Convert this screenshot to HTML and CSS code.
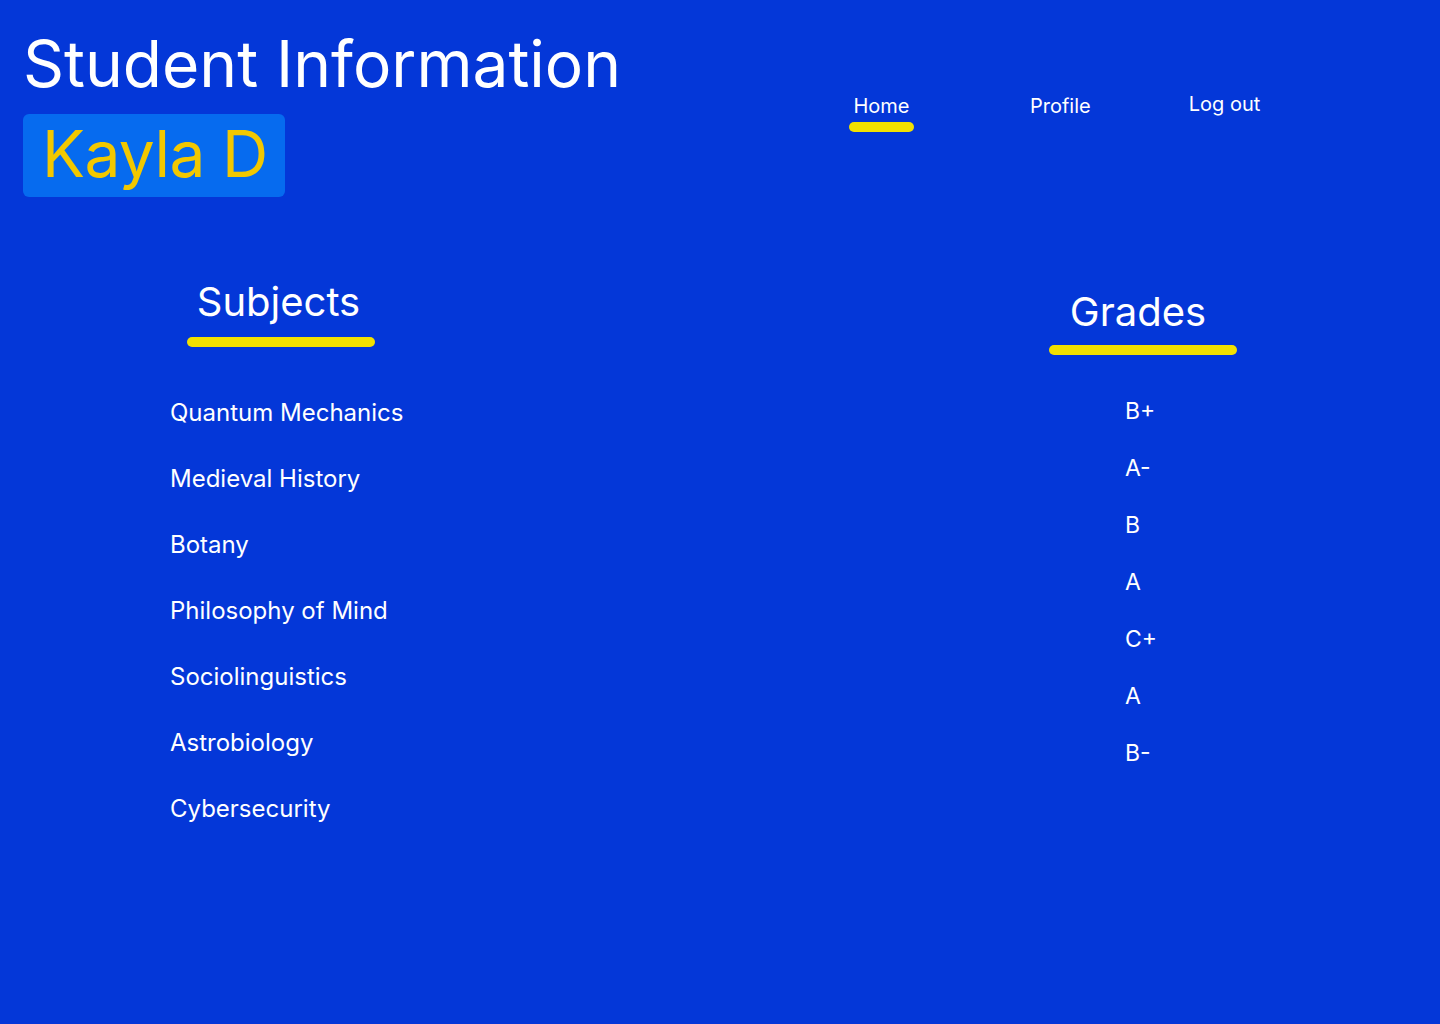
FILE: index.html
```html
<!DOCTYPE html>
<html lang="en">
<head>
<meta charset="utf-8">
<title>Student Information</title>
<link rel="stylesheet" href="styles.css">
</head>
<body>
<div class="page">
  <header class="header">
    <div class="brand">
      <h1 class="title">Student Information</h1>
      <div class="badge">Kayla D</div>
    </div>
    <nav class="nav">
      <a class="nav-item nav-item--active" href="#">
        <span class="nav-text">Home</span>
        <span class="nav-bar"></span>
      </a>
      <a class="nav-item nav-item--profile" href="#">
        <span class="nav-text">Profile</span>
      </a>
      <a class="nav-item nav-item--raised" href="#">
        <span class="nav-text">Log out</span>
      </a>
    </nav>
  </header>

  <main class="main">
    <section class="col col--subjects">
      <div class="col-head col-head--subjects">
        <h2 class="col-title">Subjects</h2>
        <div class="col-bar"></div>
      </div>
      <ul class="subject-list">
        <li>Quantum Mechanics</li>
        <li>Medieval History</li>
        <li>Botany</li>
        <li>Philosophy of Mind</li>
        <li>Sociolinguistics</li>
        <li>Astrobiology</li>
        <li>Cybersecurity</li>
      </ul>
    </section>
    <section class="col col--grades">
      <div class="col-head col-head--grades">
        <h2 class="col-title">Grades</h2>
        <div class="col-bar col-bar--grades"></div>
      </div>
      <ul class="grade-list">
        <li>B+</li>
        <li>A-</li>
        <li>B</li>
        <li>A</li>
        <li>C+</li>
        <li>A</li>
        <li>B-</li>
      </ul>
    </section>
  </main>
</div>
</body>
</html>
```

FILE: styles.css
```css
* { box-sizing: border-box; }

html, body {
  margin: 0;
  padding: 0;
}

body {
  background: #0437d8;
  color: #ffffff;
  font-family: "Inter", "Noto Sans", sans-serif;
  min-height: 1024px;
}

.page {
  display: flex;
  flex-direction: column;
}

.header {
  display: grid;
  grid-template-columns: 826px 1fr;
  padding: 32px 0 0 23px;
}

.brand {
  display: flex;
  flex-direction: column;
  align-items: flex-start;
}

.title {
  margin: 0;
  font-family: "Inter", "Noto Sans", sans-serif;
  font-weight: 400;
  font-size: 64px;
  line-height: 64px;
  color: #ffffff;
  white-space: nowrap;
}

.badge {
  margin-top: 18px;
  height: 83px;
  padding: 0 17px 3px 19px;
  background: #066bef;
  border-radius: 6px;
  font-family: "Inter", "Noto Sans", sans-serif;
  font-size: 64px;
  line-height: 80px;
  letter-spacing: -0.6px;
  color: #f2c800;
}

.nav {
  display: flex;
  align-items: flex-start;
  gap: 98px;
  margin-top: 62px;
}

.nav-item {
  display: flex;
  flex-direction: column;
  align-items: center;
  color: #ffffff;
  text-decoration: none;
  font-size: 20px;
  line-height: 24px;
}

.nav-item--active {
  width: 65px;
}

.nav-item--profile {
  margin-left: 18px;
}

.nav-item--raised {
  margin-top: -2px;
}

.nav-bar {
  display: block;
  width: 65px;
  height: 10px;
  margin-top: 4px;
  border-radius: 5px;
  background: #f2e100;
}

.main {
  display: flex;
  padding: 81px 0 0 170px;
}

.col--subjects {
  width: 879px;
}

.col--grades {
  width: 260px;
  margin-top: 10px;
}

.col-head {
  display: flex;
  flex-direction: column;
  width: 188px;
}

.col-head--subjects {
  margin-left: 17px;
}

.col-title {
  margin: 0;
  font-size: 40px;
  font-weight: 400;
  line-height: 48px;
  text-align: center;
  padding-right: 5px;
}

.col-head--grades .col-title {
  padding-right: 10px;
}

.col-bar {
  height: 10px;
  margin-top: 11px;
  border-radius: 5px;
  background: #f2e100;
}

.col-bar--grades {
  margin-top: 9px;
}

.subject-list,
.grade-list {
  list-style: none;
  margin: 0;
  padding: 0;
}

.subject-list {
  margin-top: 33px;
}

.subject-list li {
  font-size: 24px;
  line-height: 66px;
  height: 66px;
  white-space: nowrap;
}

.grade-list {
  margin-top: 28px;
  padding-left: 76px;
}

.grade-list li {
  font-size: 23px;
  line-height: 57px;
  height: 57px;
}
```
